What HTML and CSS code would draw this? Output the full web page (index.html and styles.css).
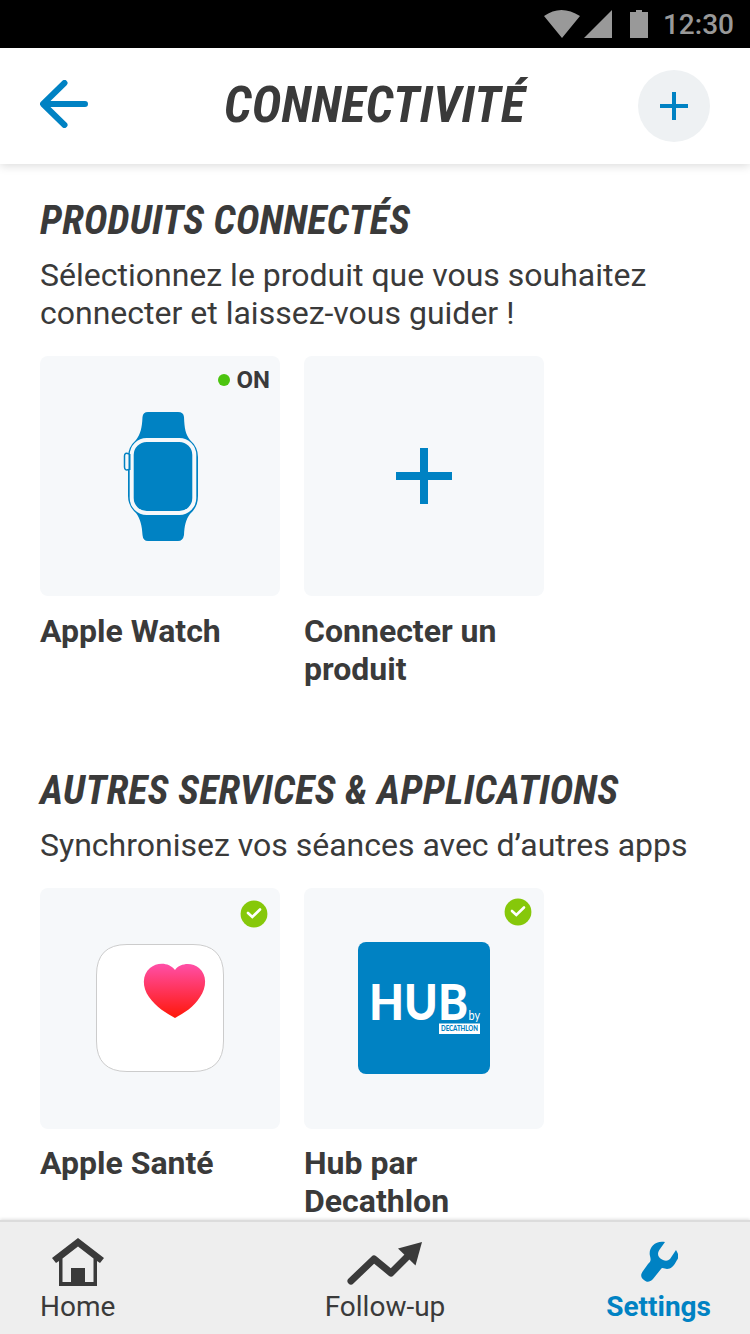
FILE: index.html
```html
<!DOCTYPE html>
<html lang="fr">
<head>
<meta charset="utf-8">
<title>Connectivité</title>
<link rel="stylesheet" href="styles.css">
</head>
<body>
<div class="screen">
  <div class="status">
    <svg width="103" height="48" viewBox="0 0 103 48" fill="#999"><path d="M0 16Q17 4 36 16L18 38ZM40 38L68 10V38ZM86 12H92V10H98V12H104V38H86Z"/></svg>
    <span class="clock">12:30</span>
  </div>
  <header class="header">
    <svg class="back" width="48" height="48" viewBox="0 0 48 48" fill="none" stroke="#0082c3" stroke-width="6" stroke-linecap="round" stroke-linejoin="round"><path d="M24.500 3L3 24L24.500 45M4 24H45"/></svg>
    <h1 class="title">CONNECTIVITÉ</h1>
    <button class="add" aria-label="Ajouter"><svg width="28" height="28" viewBox="0 0 28 28" fill="#0082c3"><path d="M12 0H16V12H28V16H16V28H12V16H0V12H12Z"/></svg></button>
  </header>
  <main class="content">
    <section class="section">
      <h2 class="heading">PRODUITS CONNECTÉS</h2>
      <p class="intro">Sélectionnez le produit que vous souhaitez connecter et laissez-vous guider !</p>
      <div class="cards">
        <article class="card">
          <div class="tile">
            <span class="on"><i class="dot"></i>ON</span>
            <svg width="240" height="240" viewBox="40 356 240 240">
              <path fill="#0082c3" d="M148 412H178Q183.500 412 184 417C184.500 429 185.500 434 190 440Q198 447 198 457V496Q198 507 190 514C185.500 520 184.500 526 184 535Q183 541 178 541H148Q143 541 142.500 535C142 526 140.500 519 136 513Q128 506 128 496V457Q128 447 136 440C140.500 434 142 428 142.500 417Q143 412 148 412Z"/>
              <rect x="131.700" y="440" width="62.600" height="73" rx="15" fill="#0082c3" stroke="#f6f8fa" stroke-width="4"/>
              <path d="M129 454Q124.500 452 124.500 456V467Q124.500 471 129 469.500" fill="#f6f8fa" stroke="#0082c3" stroke-width="1.500"/>
              <path d="M129.500 454V470" stroke="#0082c3" stroke-width="2"/>
            </svg>
          </div>
          <h3 class="name">Apple Watch</h3>
        </article>
        <article class="card">
          <div class="tile">
            <svg width="56" height="56" viewBox="0 0 56 56" fill="#0082c3"><path d="M24 0H32V24H56V32H32V56H24V32H0V24H24Z"/></svg>
          </div>
          <h3 class="name">Connecter un produit</h3>
        </article>
      </div>
    </section>
    <section class="section">
      <h2 class="heading heading-services">AUTRES SERVICES &amp; APPLICATIONS</h2>
      <p class="intro">Synchronisez vos séances avec d’autres apps</p>
      <div class="cards">
        <article class="card">
          <div class="tile tile-service">
            <svg class="check check-low" width="28" height="28" viewBox="0 0 28 28"><circle cx="14" cy="14" r="13.400" fill="#86c80a"/><path d="M8 13L12.300 17L20 9.500" fill="none" stroke="#fff" stroke-width="2.600" stroke-linecap="round"/></svg>
            <svg width="128" height="128" viewBox="0 0 128 128">
              <defs><linearGradient id="pulse" x2="0" y2="1"><stop stop-color="#ff4fa8"/><stop offset="1" stop-color="#ff1708"/></linearGradient></defs>
              <path d="M31 .5H97Q127.500 .5 127.500 31V97Q127.500 127.500 97 127.500H31Q.5 127.500 .5 97V31Q.5 .5 31 .5Z" fill="#fff" stroke="#ccc"/>
              <path d="M79 26C73 18 61 18 54 24C46 31 46 43 53 53C60 63 70 69 79 74C88 69 98 63 104 53C111 43 111 31 103 24C96 18 84 19 79 26Z" fill="url(#pulse)"/>
            </svg>
          </div>
          <h3 class="name">Apple Santé</h3>
        </article>
        <article class="card">
          <div class="tile tile-service">
            <svg class="check" width="28" height="28" viewBox="0 0 28 28"><circle cx="14" cy="14" r="13.400" fill="#86c80a"/><path d="M8 13L12.300 17L20 9.500" fill="none" stroke="#fff" stroke-width="2.600" stroke-linecap="round"/></svg>
            <svg width="132" height="132" viewBox="0 0 132 132">
              <rect width="132" height="132" rx="8" fill="#0082c3"/>
              <text class="hub" x="11" y="78" textLength="99" lengthAdjust="spacingAndGlyphs">HUB</text>
              <text class="by" x="110.500" y="78" textLength="11.500" lengthAdjust="spacingAndGlyphs">by</text>
              <rect x="81" y="81.500" width="41" height="10.500" fill="#fff"/>
              <text class="brand" x="83" y="89.300" textLength="37" lengthAdjust="spacingAndGlyphs">DECATHLON</text>
            </svg>
          </div>
          <h3 class="name">Hub par Decathlon</h3>
        </article>
      </div>
    </section>
  </main>
  <nav class="nav">
    <a class="tab tab-home">
      <svg width="52" height="50" viewBox="52 1236 52 50" fill="#3a3a3a"><path fill-rule="evenodd" d="M78 1238L104 1258L100 1263L97 1261V1286H59V1261L56 1263L52 1258ZM78 1246.500L62.500 1258.500V1282H71V1268H85V1282H93.500V1258.500Z"/></svg>
      <span>Home</span>
    </a>
    <a class="tab tab-follow">
      <svg width="76" height="50" viewBox="347 1236 76 50"><path d="M351 1281L374 1259L391 1273L411 1253" fill="none" stroke="#3a3a3a" stroke-width="7" stroke-linecap="round" stroke-linejoin="round"/><path d="M422 1242L398 1248.500L415.500 1265.500Z" fill="#3a3a3a"/></svg>
      <span>Follow-up</span>
    </a>
    <a class="tab tab-settings">
      <svg width="38" height="50" viewBox="640 1236 38 50"><path d="M665 1242C655 1240 648 1248 650 1256C651 1260 651 1261 648 1264L643 1271C640 1275 641 1278 644 1280C647 1283 650 1282 653 1279L661 1269C662 1267 665 1269 667 1269C671 1269 674 1266 677 1260C679 1257 679 1255 676 1250L670 1259Q667 1262 663 1260C657 1257 657 1253 660 1249Z" fill="#0082c3"/></svg>
      <span>Settings</span>
    </a>
  </nav>
</div>
</body>
</html>
```
FILE: styles.css
```css
* { box-sizing: border-box; }
body, h1, h2, h3, p { margin: 0; }
body { background: #fff; color: #3a3a3a; font-family: Roboto, "Liberation Sans", sans-serif; }
.screen { width: 750px; height: 1334px; display: flex; flex-direction: column; overflow: hidden; }
.status { height: 48px; flex: none; background: #000; color: #999; display: flex; justify-content: flex-end; align-items: center; gap: 16px; padding-right: 16px; }
.status svg { overflow: visible; }
.clock { font-size: 28px; font-weight: 500; line-height: 48px; padding-top: 2px; }
.header { height: 116px; flex: none; display: flex; align-items: center; justify-content: space-between; padding: 0 40px; box-shadow: 0 2px 9px rgba(0,0,0,.14); }
.back { margin-top: -4px; }
.title { font: italic 700 50px/60px "Roboto Condensed", Roboto, sans-serif; font-stretch: 75%; letter-spacing: .35px; margin: -2px 0 0 23px; }
.add { width: 72px; height: 72px; border: 0; padding: 0; border-radius: 50%; background: #eef1f3; display: grid; place-items: center; }
.content { flex: 1; min-height: 0; overflow: hidden; padding: 33px 40px 0; display: flex; flex-direction: column; gap: 79px; }
.section { flex: none; }
.heading { font: italic 700 40px/48px "Roboto Condensed", Roboto, sans-serif; font-stretch: 75%; letter-spacing: .2px; white-space: nowrap; }
.intro { font-size: 32px; line-height: 38px; margin: 11px 0 24px; width: 650px; }
.cards { display: flex; gap: 24px; }
.card { width: 240px; }
.tile { height: 240px; position: relative; border-radius: 8px; background: #f6f8fa; display: grid; place-items: center; }
.tile-service { height: 241px; margin-bottom: -1px; padding-bottom: 1px; }
.name { font-size: 32px; font-weight: 700; line-height: 38px; margin-top: 16px; }
.on { position: absolute; top: 10px; right: 10px; display: flex; align-items: center; gap: 7px; font-size: 24px; font-weight: 700; line-height: 28px; }
.dot { width: 12px; height: 12px; border-radius: 50%; background: #4cc40f; }
.check { position: absolute; top: 10px; right: 12px; }
.check-low { top: 12px; }
.hub { font: 900 49px Lato, sans-serif; fill: #fff; }
.by { font: 13px Lato, sans-serif; fill: #fff; }
.brand { font: 900 7.5px Lato, sans-serif; fill: #0082c3; }
.nav { height: 114px; flex: none; position: relative; background: #eee; border-top: 2px solid #dcdcdc; box-shadow: 0 -1px 3px rgba(0,0,0,.12); display: grid; grid-template-columns: 1fr auto 1fr; padding: 14px 39px 0 40px; column-gap: 0; font-size: 28px; line-height: 34px; }
.tab { display: flex; flex-direction: column; align-items: center; gap: 4px; }
.tab-home { justify-self: start; }
.tab-follow { margin-left: 19px; margin-right: 0; transform: none; }
.tab-settings { justify-self: end; color: #0082c3; font-weight: 700; }
```
